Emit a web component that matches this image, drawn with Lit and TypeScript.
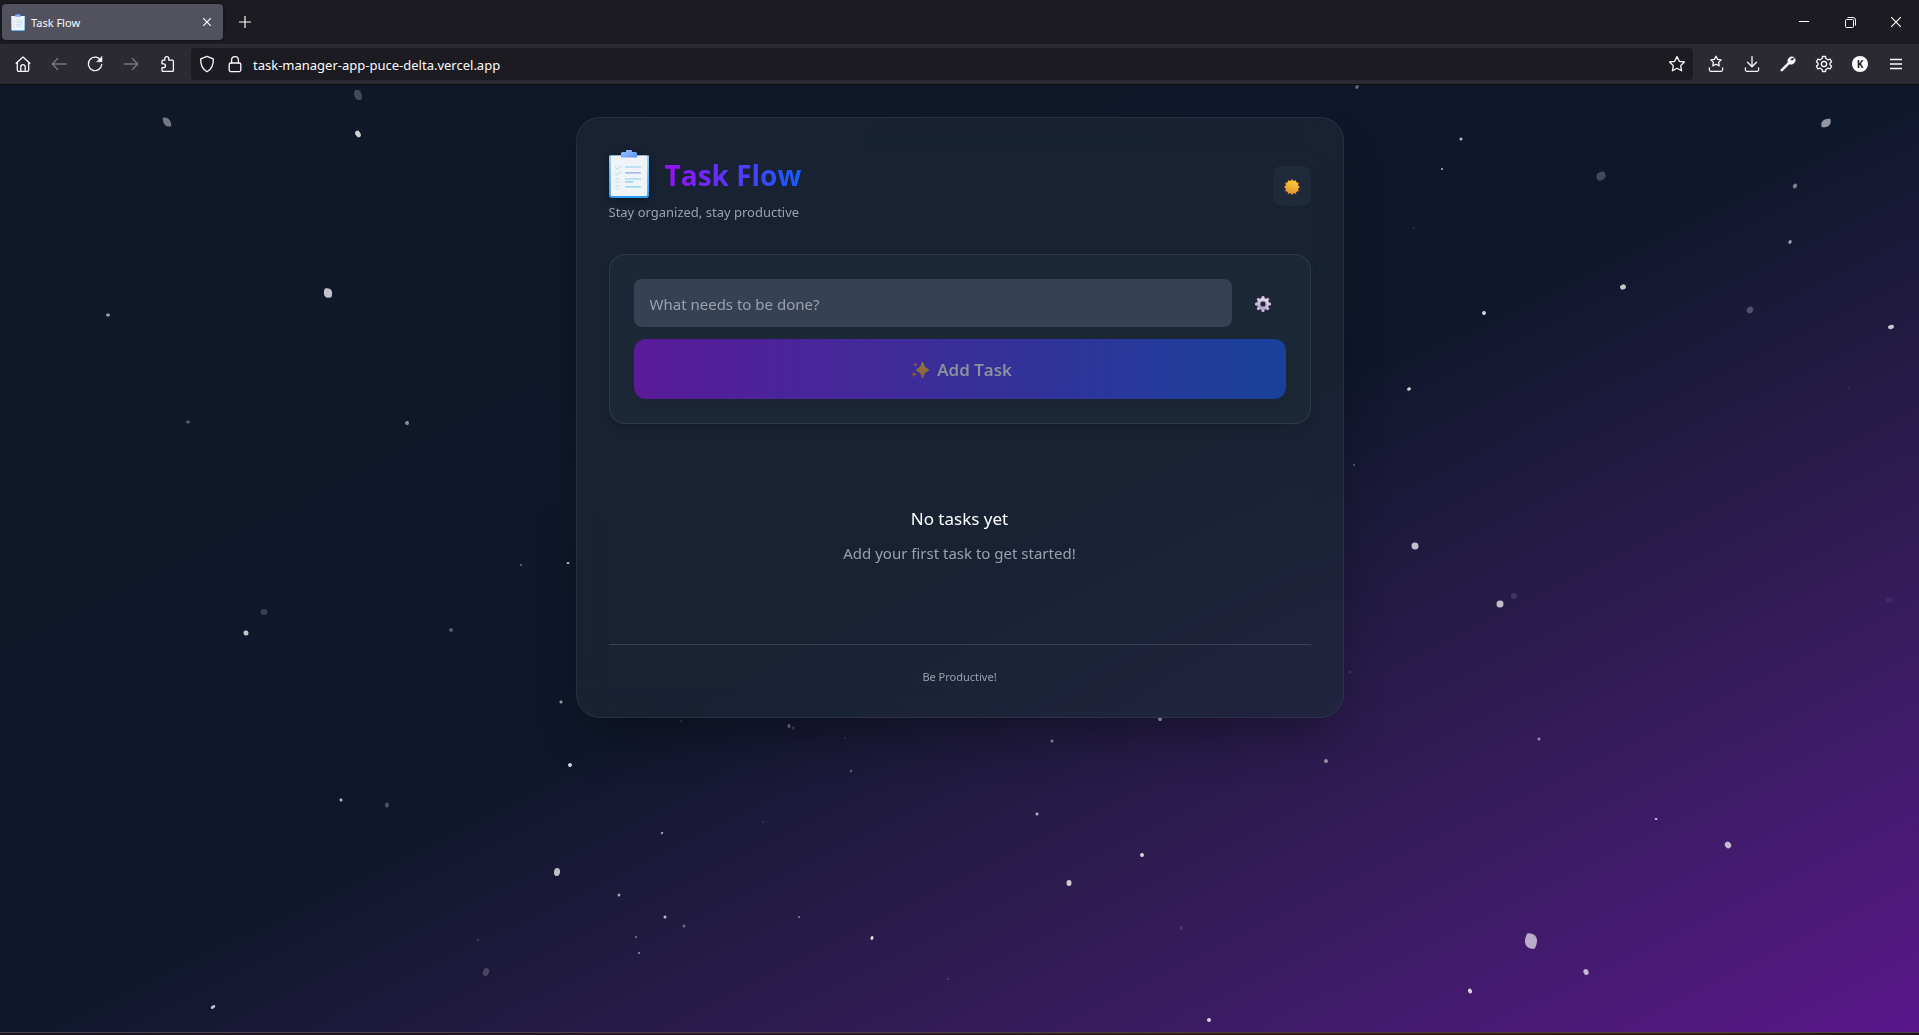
import { LitElement, html, css, svg } from "lit";
import { customElement, state } from "lit/decorators.js";

/* x, y, width, height, opacity of each drifting particle on the sky canvas (1919 x 947);
   an optional sixth value is its tilt in degrees, which otherwise points away from the centre. */
const PARTICLES: number[][] = [
  [358, 10, 12, 8, 0.22, 58], [167, 37, 12, 7, 0.42, 45], [358, 49, 7, 5, 0.8, 58], [328, 208, 11, 9, 0.75, 52],
  [108, 230, 4, 3, 0.6], [188, 337, 4, 3, 0.3], [407, 338, 4, 4, 0.5], [568, 478, 3, 2, 0.8],
  [521, 480, 2, 2, 0.4], [264, 527, 7, 6, 0.18], [246, 548, 5, 5, 0.75], [451, 545, 4, 4, 0.3],
  [561, 617, 3, 3, 0.6], [570, 680, 4, 4, 0.8], [341, 715, 3, 3, 0.7], [387, 720, 5, 4, 0.25, 105],
  [557, 787, 8, 6, 0.72, 97], [619, 810, 3, 3, 0.6], [636, 852, 2, 2, 0.45], [478, 855, 3, 3, 0.1],
  [486, 887, 8, 6, 0.2, 110], [213, 922, 5, 3, 0.75], [1357, 2, 4, 3, 0.35], [1461, 54, 3, 3, 0.7],
  [1442, 84, 2, 2, 0.7], [1601, 91, 11, 9, 0.22, 118], [1826, 38, 12, 8, 0.55, 135], [1795, 101, 5, 4, 0.45, 130],
  [1790, 157, 4, 3, 0.6, 130], [1623, 202, 6, 5, 0.75], [1484, 228, 4, 4, 0.8], [1750, 225, 7, 6, 0.25, 130],
  [1891, 242, 6, 4, 0.75], [1409, 304, 4, 3, 0.8], [1849, 303, 4, 3, 0.06], [1354, 380, 2, 1, 0.7],
  [1415, 461, 7, 7, 0.72], [1414, 143, 2, 1, 0.2], [1500, 519, 7, 7, 0.7], [1514, 511, 6, 6, 0.12],
  [1889, 515, 8, 6, 0.05], [1350, 587, 2, 2, 0.2], [1539, 654, 3, 3, 0.5], [1326, 676, 4, 4, 0.5],
  [1656, 734, 3, 2, 0.7], [1728, 760, 7, 6, 0.7, 55], [1531, 856, 17, 13, 0.64, 65], [1586, 887, 6, 5, 0.7, 65],
  [1470, 906, 5, 4, 0.8, 65], [681, 636, 2, 2, 0.2], [789, 641, 4, 3, 0.4, 90], [793, 643, 3, 3, 0.2],
  [845, 653, 2, 1, 0.25], [851, 686, 3, 2, 0.3], [1052, 656, 3, 3, 0.5], [1160, 634, 4, 4, 0.6],
  [1037, 729, 3, 3, 0.65], [763, 737, 2, 2, 0.1], [662, 748, 3, 2, 0.6], [1142, 770, 4, 4, 0.8],
  [1069, 798, 6, 5, 0.78, 90], [665, 832, 3, 3, 0.7], [684, 841, 3, 3, 0.35], [799, 832, 2, 2, 0.45],
  [872, 853, 4, 3, 0.85], [639, 868, 2, 2, 0.55], [948, 894, 2, 1, 0.4], [1181, 843, 4, 3, 0.12, 90],
  [1209, 935, 4, 4, 0.8],
];

const particle = ([x, y, w, h, o, tilt]: number[]) => {
  const angle = tilt ?? Math.round((Math.atan2(y - 475, x - 960) * 180) / Math.PI);
  const a = w / 2;
  const b = h / 2;
  const shape =
    w < 9
      ? svg`<ellipse rx=${a} ry=${b}></ellipse>`
      : svg`<path d="M${-a} 0C${-a * 0.6} ${-b * 1.3} ${a * 0.3} ${-b * 1.3} ${a} 0C${a * 0.6} ${b * 1.3} ${-a * 0.3} ${b * 1.3} ${-a} 0Z"></path>`;
  return svg`<g transform="translate(${x} ${y}) rotate(${angle})" fill="#fff" opacity=${o}>${shape}</g>`;
};

const line = (body: unknown, size = 20) => html`
  <svg class="glyph" width=${size} height=${size} viewBox="0 0 20 20" fill="none" stroke="currentColor"
    stroke-width="1.3" stroke-linecap="round" stroke-linejoin="round" aria-hidden="true">${body}</svg>`;

const STAR = "M10 2.6l2.3 4.7 5.1.7-3.7 3.6.9 5.2-4.6-2.5-4.6 2.5.9-5.2L2.600 8l5.100-.7z";

const icons = {
  home: line(svg`<path d="M3.200 9.200L10 2.900l6.800 6.300M4.300 8.500v7.400q0 1.400 1.400 1.400h8.600q1.400 0 1.400-1.400V8.500M7.800 17v-4.200a2.200 2.200 0 0 1 4.400 0V17"></path>`),
  back: line(svg`<path d="M17 10H3.400M8.600 4.500L3.200 10l5.400 5.500"></path>`),
  forward: line(svg`<path d="M3 10h13.600M11.400 4.500l5.400 5.500-5.400 5.500"></path>`),
  reload: line(svg`<path d="M15.700 6.300A6.700 6.700 0 1 0 16.700 10.500"></path><path d="M17 2.700v5h-5z" fill="currentColor" stroke-width=".6"></path>`),
  extension: line(svg`<path d="M7.800 6.200V4.600a2 2 0 0 1 4 0v1.600h3.600q1 0 1 1v9.200q0 1-1 1H6q-1 0-1-1v-2.800h1.600a1.900 1.900 0 0 0 0-3.800H5V7.200q0-1 1-1z"></path>`),
  shield: line(svg`<path d="M10 2.300l6.300 2.500c.3 6.300-1.400 10.400-6.300 13-4.900-2.600-6.600-6.700-6.300-13z"></path>`),
  lock: line(svg`<rect x="4.200" y="9" width="11.600" height="8.600" rx="1.500"></rect><path d="M6.600 9V6a3.400 3.400 0 0 1 6.800 0v3"></path>`),
  star: line(svg`<path d=${STAR}></path>`),
  library: line(svg`<path d="M10 2.200l1.600 3.200 3.500.5-2.500 2.500.6 3.500-3.200-1.700-3.200 1.700.6-3.500-2.500-2.500 3.500-.5zM3.400 14v1.800q0 1.500 1.500 1.500h10.200q1.500 0 1.500-1.500V14"></path>`),
  download: line(svg`<path d="M10 2.500v10M5.500 8.300l4.500 4.500 4.500-4.500M3.400 13.800v2q0 1.500 1.500 1.500h10.200q1.500 0 1.500-1.500v-2"></path>`),
  wrench: line(svg`<path d="M3.800 16.200l7-7" stroke-width="2.600"></path><path d="M15.800 3.200a4.200 4.200 0 0 0-5.600 5.600l1 1a4.200 4.200 0 0 0 5.700-5.500l-2.600 2.400-1.700-.4-.4-1.500z" fill="currentColor" stroke-width=".6"></path>`),
  gear: line(svg`<circle cx="10" cy="10" r="2.600"></circle><path d="M8.500 2.500h3l.6 2.300 1.700 1 2.300-.7 1.500 2.600-1.700 1.600v1.400l1.700 1.600-1.500 2.600-2.300-.7-1.700 1-.6 2.300h-3l-.6-2.300-1.700-1-2.300.7-1.500-2.600 1.700-1.600V9.300L2.400 7.700l1.500-2.600 2.300.7 1.700-1z"></path>`),
  menu: line(svg`<path d="M4 5.500h12M4 10h12M4 14.500h12" stroke-linecap="butt"></path>`),
};

const clipboard = (w: number, h: number) => html`
  <svg class="glyph" width=${w} height=${h} viewBox="0 0 40 48" aria-hidden="true">
    <defs>
      <linearGradient id="edge" x1="0" y1="0" x2="0" y2="1"><stop offset="0" stop-color="#8ecbf5"></stop><stop offset="1" stop-color="#2c9df4"></stop></linearGradient>
      <linearGradient id="clip" x1="0" y1="0" x2="1" y2="1"><stop offset="0" stop-color="#9cc4ff"></stop><stop offset="1" stop-color="#5a92f5"></stop></linearGradient>
    </defs>
    <path d="M0 5.500h40V45a3 3 0 0 1-3 3H3a3 3 0 0 1-3-3z" fill="url(#edge)"></path>
    <path d="M1.800 5.500h36.400v39a1.500 1.500 0 0 1-1.500 1.500H3.300a1.500 1.500 0 0 1-1.500-1.500z" fill="#f1f4f6"></path>
    <path d="M12 7.500V3.500q0-1.500 1.500-1.500H17V1q0-1 1-1h4q1 0 1 1v1h3.500Q28 2 28 3.500v4z" fill="url(#clip)"></path>
    <g fill="none" stroke-linecap="round">
      <path d="M6.500 17.500l2 1.500 3.500-3M6.500 23.300l2 1.500 3.500-3" stroke="#a9dbf0"></path>
      <g stroke="#c3e6f6"><rect x="7" y="28.500" width="4" height="4" rx="1"></rect><rect x="7" y="35.500" width="4" height="4" rx="1"></rect></g>
      <path d="M16.500 17h15M16.500 29h15M16.500 31.800h7.500M16.500 36.800h15" stroke="#83cdf2" stroke-width="1.200"></path>
      <path d="M16.500 22.800h15" stroke="#8ea6f4" stroke-width="1.200"></path>
    </g>
  </svg>`;

const teeth = (n: number, body: unknown) =>
  Array.from({ length: n }, (_, i) => svg`<g transform="rotate(${(i * 360) / n} 8 8)">${body}</g>`);

const sun = html`
  <svg class="glyph" width="16" height="16" viewBox="0 0 16 16" aria-hidden="true">
    <defs><linearGradient id="sun" x1=".7" y1="0" x2=".3" y2="1"><stop offset="0" stop-color="#ffce3a"></stop><stop offset="1" stop-color="#e3962b"></stop></linearGradient></defs>
    ${teeth(12, svg`<path d="M8-.300L9.900 3H6.100z" fill="#f2802f"></path>`)}
    <circle cx="8" cy="8" r="6.600" fill="url(#sun)"></circle>
  </svg>`;

const cog = html`
  <svg class="glyph" width="16" height="16" viewBox="0 0 16 16" aria-hidden="true">
    <defs><linearGradient id="cog" x1=".7" y1="0" x2=".3" y2="1"><stop offset="0" stop-color="#e6deec"></stop><stop offset="1" stop-color="#b9a3d3"></stop></linearGradient></defs>
    ${teeth(8, svg`<rect x="6.500" y="0" width="3" height="4" rx="1.200" fill="#cfc0dd"></rect>`)}
    <circle cx="8" cy="8" r="4.300" fill="none" stroke="url(#cog)" stroke-width="3.400"></circle>
    <circle cx="8" cy="8" r="3" fill="none" stroke="#8b7aa5" stroke-width=".8"></circle>
  </svg>`;

const sparkles = html`
  <svg class="glyph" width="18" height="16" viewBox="0 0 18 16" aria-hidden="true">
    <defs><linearGradient id="spark" x1="0" y1="0" x2="0" y2="1"><stop offset="0" stop-color="#ffc83d"></stop><stop offset="1" stop-color="#f59a3c"></stop></linearGradient></defs>
    <path d="M11.500 0q.9 0 1.200 1.600.8 4 4.100 5.200 1.200.5 1.200 1.200t-1.200 1.200q-3.300 1.200-4.100 5.200-.3 1.600-1.200 1.600t-1.200-1.600Q9.500 10.400 6.200 9.200 5 8.700 5 8t1.200-1.200q3.300-1.200 4.100-5.200Q10.600 0 11.500 0z" fill="url(#spark)"></path>
    <path d="M4.500 0l.8 1.900 1.900.8-1.900.8-.8 1.900-.8-1.900-1.900-.8 1.900-.8zM3 9.200l.9 2.300 2.300.9-2.300.9L3 15.600l-.9-2.300-2.300-.9 2.300-.9z" fill="#f28c3a"></path>
  </svg>`;

@customElement("browser-chrome")
export class BrowserChrome extends LitElement {
  static styles = css`
    :host {
      display: block;
      flex: none;
      color: #fbfbfe;
      font-family: "Noto Sans", "Open Sans", sans-serif;
      background: #2b2a33;
      border-bottom: 1px solid #0c0c0d;
    }
    button { font: inherit; color: inherit; background: none; border: 0; padding: 0; display: grid; place-items: center; }
    .glyph { display: block; }
    .tabs { display: flex; align-items: center; height: 44px; background: #1c1b22; padding-left: 2px; }
    .tab {
      display: flex; align-items: center; gap: 6px; box-sizing: border-box; width: 221px; height: 36px;
      padding: 0 6px 0 9px; background: #52525e; border-radius: 4px; font-size: 11px;
      box-shadow: 0 0 3px rgba(0, 0, 0, 0.6);
    }
    .title { flex: 1; }
    .close { width: 20px; height: 20px; }
    .add { width: 44px; height: 36px; }
    .window { display: flex; margin-left: auto; }
    .window button { width: 46px; height: 44px; }
    .toolbar { display: flex; align-items: center; height: 40px; padding: 0 5px; }
    .tool { width: 36px; height: 32px; }
    .tool:disabled { color: #77767e; }
    .address {
      display: flex; align-items: center; flex: 1; min-width: 0; height: 32px; margin: 0 5px 0 6px;
      background: #1c1b22; border-radius: 4px;
    }
    .address .site { width: 24px; height: 32px; }
    .address .site:first-child { width: 32px; }
    .address input {
      flex: 1; min-width: 0; padding: 2px 6px 0; border: 0; outline: 0; background: none; color: inherit;
      font: 13px/20px "Noto Sans", "Open Sans", sans-serif;
    }
    .address .mark { width: 32px; height: 32px; }
    .avatar {
      display: grid; place-items: center; width: 16px; height: 16px; border-radius: 50%;
      background: #fff; color: #1c1b22; font: bold 10px/16px "Noto Sans", sans-serif;
    }
  `;

  render() {
    const tool = (label: string, icon: unknown, disabled = false) =>
      html`<button class="tool" aria-label=${label} ?disabled=${disabled}>${icon}</button>`;
    return html`
      <div class="tabs">
        <div class="tab">
          ${clipboard(14, 17)}
          <span class="title">Task Flow</span>
          <button class="close" aria-label="Close tab">
            <svg width="8" height="8" viewBox="0 0 8 8" stroke="currentColor" stroke-width="1.200"><path d="M0 0l8 8M8 0L0 8"></path></svg>
          </button>
        </div>
        <button class="add" aria-label="New tab">
          <svg width="12" height="12" viewBox="0 0 12 12" stroke="currentColor" stroke-width="1.200"><path d="M0 6h12M6 0v12"></path></svg>
        </button>
        <div class="window">
          <button aria-label="Minimise"><svg width="10" height="10" viewBox="0 0 10 10" fill="currentColor"><path d="M0 4h10v1H0z"></path></svg></button>
          <button aria-label="Restore">
            <svg width="11" height="11" viewBox="0 0 11 11" fill="none" stroke="currentColor"><rect x=".5" y="2.500" width="8" height="8" rx="1"></rect><path d="M2.500.5H8q2.500 0 2.500 2.500v5.500"></path></svg>
          </button>
          <button aria-label="Close"><svg width="10" height="10" viewBox="0 0 10 10" stroke="currentColor" stroke-width="1.200"><path d="M0 0l10 10M10 0L0 10"></path></svg></button>
        </div>
      </div>
      <div class="toolbar">
        ${tool("Home", icons.home)} ${tool("Back", icons.back, true)} ${tool("Reload", icons.reload)}
        ${tool("Forward", icons.forward, true)} ${tool("Extensions", icons.extension)}
        <div class="address">
          <button class="site" aria-label="Tracking protection">${icons.shield}</button>
          <button class="site" aria-label="Connection security">${icons.lock}</button>
          <input type="text" aria-label="Address" .value=${"task-manager-app-puce-delta.vercel.app"} />
          <button class="mark" aria-label="Bookmark this page">${icons.star}</button>
        </div>
        ${tool("Bookmarks", icons.library)} ${tool("Downloads", icons.download)} ${tool("Developer tools", icons.wrench)}
        ${tool("Settings", icons.gear)} ${tool("Account", html`<span class="avatar">K</span>`)} ${tool("Menu", icons.menu)}
      </div>
    `;
  }
}

@customElement("app-root")
export class AppRoot extends LitElement {
  @state() private draft = "";

  static styles = css`
    :host {
      display: flex;
      flex-direction: column;
      min-height: 100vh;
      font-family: "Noto Sans", "Open Sans", sans-serif;
      color: #fff;
    }
    * { box-sizing: border-box; }
    h1, h2, p { margin: 0; }
    button { font: inherit; color: inherit; border: 0; padding: 0; }
    .glyph { display: block; }
    .page {
      position: relative; isolation: isolate; flex: 1; padding: 32px 16px;
      background: linear-gradient(to bottom right in oklab, #101828, #0f172b 50%, #59168b);
    }
    .sky { position: absolute; inset: 0; width: 100%; height: 100%; z-index: -1; }
    .edge {
      flex: none; height: 3px; border-top: 1px solid #4a4145;
      background: linear-gradient(to right, #17141f, #2a1530 40%, #3a1812 65%, #3a160c 90%, #280e1c);
    }
    .card {
      max-width: 768px; margin: 0 auto; padding: 32px; border: 1px solid rgba(74, 85, 101, 0.3);
      border-radius: 24px; background: rgba(30, 41, 57, 0.6); backdrop-filter: blur(16px);
      box-shadow: 0 25px 50px -12px rgba(0, 0, 0, 0.35);
    }
    .head { display: flex; align-items: center; justify-content: space-between; margin-bottom: 32px; }
    .brand { display: flex; align-items: center; gap: 16px; height: 48px; margin-bottom: 4px; }
    .brand .glyph { filter: drop-shadow(0 2px 3px rgba(0, 0, 0, 0.3)); }
    h1 {
      padding-top: 2px; font: 700 28px/36px "Open Sans", "Noto Sans", sans-serif; color: transparent;
      background: linear-gradient(to right, #9810fa, #155dfc); background-clip: text; -webkit-background-clip: text;
    }
    .tagline { font-size: 13px; line-height: 20px; color: #99a1af; }
    .theme {
      display: grid; place-items: center; width: 38px; height: 40px; padding-top: 2px; border-radius: 8px;
      background: #1e2939;
    }
    .form {
      display: grid; gap: 12px; padding: 24px; border: 1px solid rgba(74, 85, 101, 0.4); border-radius: 16px;
      background: rgba(30, 41, 57, 0.9); box-shadow: 0 4px 8px rgba(0, 0, 0, 0.1);
    }
    .row { display: flex; gap: 8px; }
    .field {
      flex: 1; min-width: 0; height: 48px; padding: 2px 16px 0; border: 0; outline: 0; border-radius: 8px;
      background: #364153; color: #fff; font: 15px/24px "Noto Sans", "Open Sans", sans-serif;
    }
    .field::placeholder { color: #99a1af; opacity: 1; }
    .options { display: grid; place-items: center; width: 46px; height: 48px; padding-top: 2px; background: none; }
    .submit {
      display: flex; align-items: center; justify-content: center; gap: 8px; height: 60px; padding: 2px 0 0 4px;
      border-radius: 12px; background: linear-gradient(to right, #9810fa, #155dfc);
      font: 600 17px/28px "Open Sans", "Noto Sans", sans-serif; box-shadow: 0 8px 12px rgba(0, 0, 0, 0.15);
    }
    .submit:disabled { opacity: 0.5; color: #fff; }
    .empty { display: grid; gap: 6px; padding: 81px 0 77px; text-align: center; }
    h2 { font-size: 17px; line-height: 28px; font-weight: 400; }
    .hint { font-size: 15px; line-height: 28px; color: #99a1af; }
    .foot {
      padding-top: 24px; border-top: 1px solid #364153; text-align: center;
      font-size: 11px; line-height: 16px; color: #99a1af;
    }
  `;

  render() {
    return html`
      <browser-chrome></browser-chrome>
      <main class="page">
        <svg class="sky" viewBox="0 0 1919 947" preserveAspectRatio="xMidYMin slice" aria-hidden="true">
          ${PARTICLES.map(particle)}
        </svg>
        <section class="card">
          <header class="head">
            <div>
              <div class="brand">${clipboard(40, 48)}<h1>Task Flow</h1></div>
              <p class="tagline">Stay organized, stay productive</p>
            </div>
            <button class="theme" aria-label="Switch to light theme">${sun}</button>
          </header>
          <form class="form" @submit=${(e: Event) => e.preventDefault()}>
            <div class="row">
              <input class="field" type="text" aria-label="New task" placeholder="What needs to be done?"
                .value=${this.draft} @input=${(e: Event) => (this.draft = (e.target as HTMLInputElement).value)} />
              <button class="options" type="button" aria-label="Task options">${cog}</button>
            </div>
            <button class="submit" type="submit" ?disabled=${!this.draft.trim()}>${sparkles}<span>Add Task</span></button>
          </form>
          <div class="empty">
            <h2>No tasks yet</h2>
            <p class="hint">Add your first task to get started!</p>
          </div>
          <footer class="foot">Be Productive!</footer>
        </section>
      </main>
      <div class="edge"></div>
    `;
  }
}
